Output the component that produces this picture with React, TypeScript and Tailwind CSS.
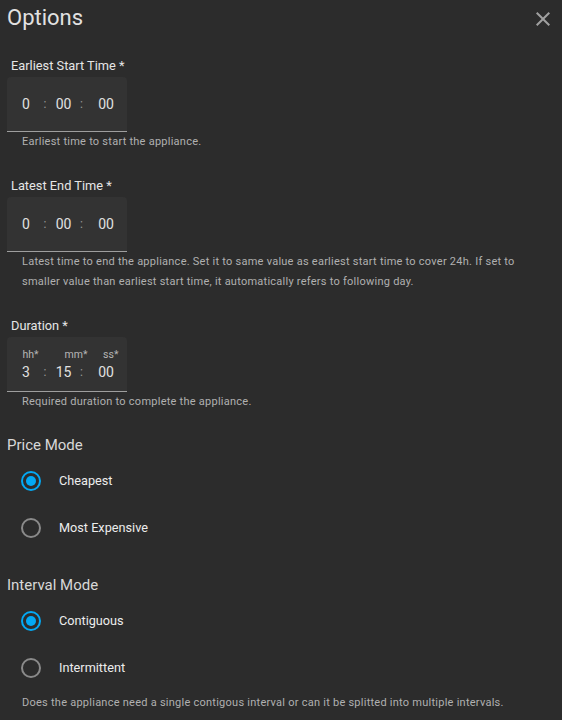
import React from 'react';

type TimeProps = { h: string; m: string; s: string; units?: boolean };

function TimeBox({ h, m, s, units }: TimeProps) {
  return (
    <div
      className={`w-[120px] h-[55px] bg-[#333333] border-b border-[#9e9e9e] rounded-t-[4px] flex flex-col ${
        units ? 'pt-[11px]' : 'justify-center'
      }`}
    >
      {units && (
        <div className="flex h-[14px] leading-[14px] text-[10.5px] text-[#b5b5b5]">
          <span className="ml-[15.5px]">hh*</span>
          <span className="ml-[26px]">mm*</span>
          <span className="ml-[15.5px]">ss*</span>
        </div>
      )}
      <div className="flex h-5 leading-5 text-[14px] text-[#e0e0e0]">
        <span className="w-[34px] pl-[15px]">{h}</span>
        <span className="w-[8px] text-center text-[12px] text-[#9a9a9a]">:</span>
        <span className="w-[29px] text-center">{m}</span>
        <span className="w-[7px] text-center text-[12px] text-[#9a9a9a]">:</span>
        <span className="w-[42px] text-center">{s}</span>
      </div>
    </div>
  );
}

function Field({ label, help, children }: { label: string; help: string; children: React.ReactNode }) {
  return (
    <div className="mt-[26px]">
      <div className="pl-[4px] mb-[3px] text-[12.8px] leading-4 text-[#e6e6e6]">{label}</div>
      {children}
      <p className="px-[15px] text-[11px] tracking-[0.25px] leading-5 text-[#b0b0b0]">{help}</p>
    </div>
  );
}

function Radio({ label, checked }: { label: string; checked?: boolean }) {
  return (
    <div className="h-[47px] flex items-center pl-[14px]">
      <span
        className={`w-[20px] h-[20px] rounded-full border-2 flex items-center justify-center ${
          checked ? 'border-[#03a9f4]' : 'border-[#8a8a8a]'
        }`}
      >
        {checked && <span className="w-[10px] h-[10px] rounded-full bg-[#03a9f4]" />}
      </span>
      <span className="ml-[18px] text-[12.7px] text-[#ececec]">{label}</span>
    </div>
  );
}

export default function App() {
  return (
    <div className="w-[562px] h-[720px] overflow-hidden bg-[#2c2c2c] px-[7px] pt-[4px] font-[Roboto,sans-serif]">
      {/* header */}
      <div className="flex items-start justify-between">
        <h2 className="text-[22px] leading-7 text-[#e1e1e1]">Options</h2>
        <svg viewBox="0 0 24 24" className="w-6 h-6 mt-[3px] fill-[#a0a0a0]">
          <path d="M19 6.41 17.59 5 12 10.59 6.41 5 5 6.41 10.59 12 5 17.59 6.41 19 12 13.41 17.59 19 19 17.59 13.41 12z" />
        </svg>
      </div>

      <Field label="Earliest Start Time *" help="Earliest time to start the appliance.">
        <TimeBox h="0" m="00" s="00" />
      </Field>
      <Field
        label="Latest End Time *"
        help="Latest time to end the appliance. Set it to same value as earliest start time to cover 24h. If set to smaller value than earliest start time, it automatically refers to following day."
      >
        <TimeBox h="0" m="00" s="00" />
      </Field>
      <Field label="Duration *" help="Required duration to complete the appliance.">
        <TimeBox h="3" m="15" s="00" units />
      </Field>

      <div className="mt-[23px] text-[15px] leading-5 text-[#d8d8d8]">Price Mode</div>
      <div className="mt-[2px]">
        <Radio label="Cheapest" checked />
        <Radio label="Most Expensive" />
      </div>

      <div className="mt-[24px] text-[15px] leading-5 text-[#d8d8d8]">Interval Mode</div>
      <div className="mt-[2px]">
        <Radio label="Contiguous" checked />
        <Radio label="Intermittent" />
      </div>
      <p className="mt-[2px] px-[15px] text-[11px] tracking-[0.25px] leading-5 text-[#b0b0b0]">
        Does the appliance need a single contigous interval or can it be splitted into multiple intervals.
      </p>
    </div>
  );
}
